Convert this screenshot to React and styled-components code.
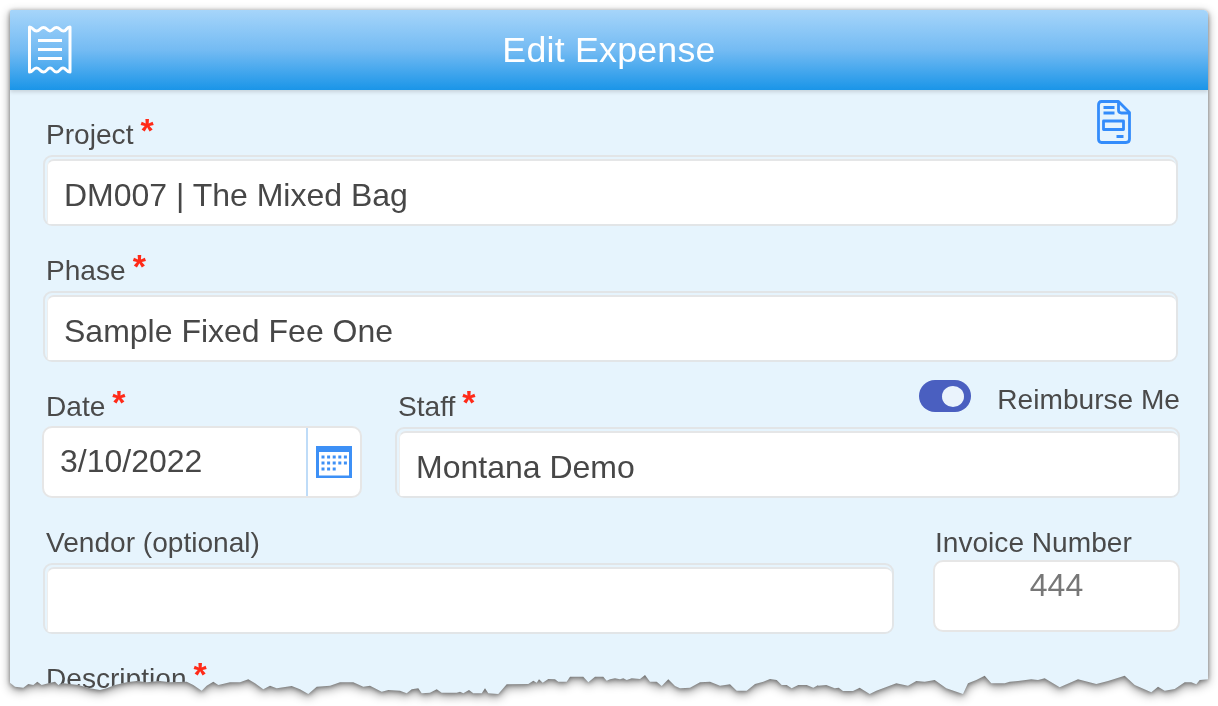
import React from "react";
import styled, { createGlobalStyle } from "styled-components";

const GlobalStyle = createGlobalStyle`
  html, body { margin: 0; padding: 0; background: #fff; overflow: hidden; }
  body { font-family: "Liberation Sans", Arial, sans-serif; }
`;

// torn lower edge, traced from the picture: [originX, originY, points at 3x]
const tearParts = [
  [0, 620, [[30,188],[45,200],[70,203],[85,192],[100,195],[112,185],[125,195],[145,190],[165,185],[175,195],[190,190],[235,195],[270,205],[300,210],[320,205],[345,195],[380,187],[410,183],[440,187],[480,183],[510,187],[560,185],[580,195],[605,212],[620,197],[640,185],[655,195],[690,187],[720,187],[745,178],[765,190],[790,208],[810,197],[830,205],[875,198],[900,208],[925,222],[950,200],[990,197],[1020,187],[1060,187],[1090,200],[1110,197],[1145,215],[1165,210],[1200,212]]],
  [400, 650, [[20,130],[35,118],[55,115],[65,130],[90,128],[110,118],[125,128],[170,128],[180,125],[190,130],[207,120],[220,130],[245,130],[255,115],[265,130],[295,132],[320,103],[385,102],[400,92],[410,98],[417,88],[428,98],[445,87],[465,88],[475,95],[500,95],[510,80],[550,80],[565,97],[585,80],[610,80],[620,92],[630,88]]],
  [610, 650, [[15,85],[30,88],[40,85],[50,90],[65,85],[90,87],[105,75],[120,95],[140,95],[155,108],[175,88],[195,108],[210,115],[240,113],[270,97],[300,95],[330,107],[360,103],[380,122],[410,122],[435,102],[460,95],[480,87],[500,90],[515,105],[530,105],[545,115],[565,105],[590,105],[610,113],[625,105]]],
  [818, 620, [[0,197],[25,195],[50,205],[62,203],[75,213],[105,213],[125,203],[155,222],[175,212],[195,205],[235,190],[270,197],[295,183],[320,185],[350,180],[385,205],[435,222],[450,190],[475,180],[500,167],[520,190],[560,190],[575,185],[600,183],[640,178],[660,180],[680,175],[725,202],[780,178],[835,192],[870,183],[920,167],[950,195],[1000,217],[1020,200],[1040,212],[1070,207],[1100,187],[1120,187],[1135,193],[1145,180],[1170,178]]],
];
const tearPoints = tearParts
  .flatMap(([ox, oy, pts]) => pts.map(([x, y]) => [ox + x / 3 - 10, oy + y / 3 - 10]))
  .reverse()
  .map(([x, y]) => `${x.toFixed(1)}px ${y.toFixed(1)}px`)
  .join(", ");
const cardClip = `polygon(0px 1px, 1px 0px, 1194px 0px, 1196.5px 1px, 1198px 3.5px, ${tearPoints})`;

const Page = styled.div`
  width: 1218px;
  height: 706px;
  padding: 10px 10px 0;
  box-sizing: border-box;
  overflow: hidden;
`;
const ShadowWrap = styled.div`
  filter: drop-shadow(0 1px 2px rgba(0, 0, 0, 0.35)) drop-shadow(0 3px 5px rgba(0, 0, 0, 0.42));
`;
const Card = styled.div`
  width: 1198px;
  height: 690px;
  background: #e6f4fd;
  overflow: hidden;
  clip-path: ${cardClip};
`;
const Header = styled.header`
  height: 80px;
  position: relative;
  display: flex;
  align-items: center;
  justify-content: center;
  background: linear-gradient(to bottom, #a6d5fa 0%, #74bbf3 50%, #1a95e8 100%);
  box-shadow: 0 2px 4px rgba(0, 0, 0, 0.14);
`;
const HeaderIcon = styled.svg`
  position: absolute;
  left: 18px;
  top: 15px;
  width: 44px;
  height: 50px;
`;
const Title = styled.h1`
  margin: 0;
  font-size: 35.7px;
  font-weight: 400;
  letter-spacing: 0.25px;
  color: #fff;
  line-height: 80px;
`;
const Form = styled.main`
  padding: 29px 30px 0 33px;
  display: flex;
  flex-direction: column;
  gap: 29px;
`;
const Block = styled.section`
  display: flex;
  flex-direction: column;
`;
const LabelRow = styled.div`
  height: 36px;
  display: flex;
  justify-content: space-between;
  align-items: flex-start;
`;
const Label = styled.label`
  padding-left: ${(p) => p.$indent ?? 3}px;
  font-size: 28.1px;
  line-height: 32px;
  color: #4a4a4a;
  white-space: nowrap;
`;
const Star = styled.span`
  margin-left: 7px;
  font-size: 34px;
  font-weight: 700;
  line-height: 0;
  color: #ff2a18;
  vertical-align: 2px;
`;
const DocIcon = styled.svg`
  width: 34px;
  height: 44px;
  margin: -19px 47px 0 0;
  flex: none;
`;
const Field = styled.div`
  height: 71px;
  box-sizing: border-box;
  padding: 2px 0 0 2px;
  border: 2px solid #e2e5e7;
  border-radius: 9px;
`;
const FieldInner = styled.div`
  height: 100%;
  box-sizing: border-box;
  padding: 6px 0 0 16px;
  display: flex;
  align-items: center;
  background: #fff;
  border-top: 2px solid #e5e6e7;
  border-left: 1px solid #eeeeee;
  border-radius: 7px 7px 7px 2px;
  font-size: 32px;
  color: #474747;
  white-space: nowrap;
`;
const TripleRow = styled.div`
  display: grid;
  grid-template-columns: 320px 785px;
  column-gap: 33px;
  margin: 0 -2px 0 -1px;
`;
const VendorRow = styled.div`
  display: grid;
  grid-template-columns: 851px 247px;
  column-gap: 39px;
  margin-right: -2px;
`;
const ToggleGroup = styled.div`
  display: flex;
  align-items: center;
  gap: 26px;
  margin-top: -15px;
`;
const Toggle = styled.span`
  width: 52px;
  height: 32px;
  border-radius: 16px;
  background: #4a5fc0;
  display: flex;
  align-items: center;
  justify-content: flex-end;
  padding-right: 7px;
  box-sizing: border-box;
`;
const Knob = styled.span`
  width: 22px;
  height: 21px;
  border-radius: 50%;
  background: #eaf3fc;
`;
const ToggleText = styled.span`
  padding-top: 8px;
  font-size: 28.1px;
  line-height: 32px;
  color: #4a4a4a;
  white-space: nowrap;
`;
const DateBox = styled.div`
  height: 72px;
  margin-top: -1px;
  box-sizing: border-box;
  display: flex;
  background: #fff;
  border: 2px solid #e6e6e6;
  border-radius: 10px;
`;
const DateValue = styled.div`
  flex: 1;
  padding: 0 0 2px 16px;
  display: flex;
  align-items: center;
  font-size: 32px;
  color: #474747;
  border-right: 2px solid #bfdcf8;
`;
const CalendarSlot = styled.div`
  width: 52px;
  display: flex;
  align-items: center;
  justify-content: center;
`;
const InvoiceBox = styled.div`
  height: 72px;
  margin-top: -3px;
  box-sizing: border-box;
  padding-top: 5px;
  background: #fff;
  border: 2px solid #e6e6e6;
  border-radius: 10px;
  text-align: center;
  font-size: 32px;
  line-height: 37px;
  color: #777;
`;

const ReceiptGlyph = () => (
  <HeaderIcon viewBox="0 0 44 50" fill="none" stroke="#fff" strokeWidth="3" strokeLinejoin="round" strokeLinecap="round">
    <path d="M1.5 2 C5 2 5 6 8.5 6 C12 6 12 2.5 15.5 2.5 C19 2.5 19 6 22 6 C25 6 25 2.5 28.5 2.5 C32 2.5 32 6 35.5 6 C39 6 38 2 42 2 V47 C38 47 38 43 35 43 C32 43 32 47 28.5 47 C25 47 25 43 22 43 C19 43 19 47 15.5 47 C12 47 12 43 8.5 43 C5 43 5 47 1.5 47 Z" />
    <path d="M10 15.5 H34 M10 24.5 H34 M10 33.5 H34" strokeLinecap="butt" strokeWidth="3" />
  </HeaderIcon>
);

const DocGlyph = () => (
  <DocIcon viewBox="0 0 34 44" fill="none" stroke="#338cfb" strokeWidth="2.8" strokeLinejoin="round">
    <path d="M4.5 1.5 H21.5 L32.5 12.5 V39 Q32.5 42.5 29 42.5 H4.5 Q1.5 42.5 1.5 39 V5 Q1.5 1.5 4.5 1.5 Z" />
    <path d="M21.5 1.5 V10 Q21.5 13 24.5 13 H32.5" />
    <path d="M6.5 7.5 H17.5 M6.5 13 H17.5 M19.5 36.5 H26.5" strokeWidth="2.8" />
    <rect x="6.5" y="21" width="20" height="8.5" />
  </DocIcon>
);

const calendarDots = [
  [0, 0], [1, 0], [2, 0], [3, 0], [4, 0],
  [0, 1], [1, 1], [2, 1], [3, 1], [4, 1],
  [0, 2], [1, 2], [2, 2],
];
const CalendarGlyph = () => (
  <svg width="36" height="32" viewBox="0 0 36 32">
    <rect width="36" height="32" fill="#3d90f6" />
    <rect x="3" y="6" width="30" height="23.5" fill="#fff" />
    {calendarDots.map(([c, r]) => (
      <rect key={`${c}-${r}`} x={5.5 + c * 5.6} y={9.5 + r * 6} width="3" height="3" fill="#3d90f6" />
    ))}
  </svg>
);

const Required = () => <Star>*</Star>;

export default function App() {
  return (
    <>
      <GlobalStyle />
      <Page>
        <ShadowWrap>
          <Card>
            <Header>
              <ReceiptGlyph />
              <Title>Edit Expense</Title>
            </Header>
            <Form>
              <Block>
                <LabelRow>
                  <Label>Project<Required /></Label>
                  <DocGlyph />
                </LabelRow>
                <Field><FieldInner>DM007 | The Mixed Bag</FieldInner></Field>
              </Block>
              <Block>
                <LabelRow><Label>Phase<Required /></Label></LabelRow>
                <Field><FieldInner>Sample Fixed Fee One</FieldInner></Field>
              </Block>
              <TripleRow>
                <Block>
                  <LabelRow><Label $indent={4}>Date<Required /></Label></LabelRow>
                  <DateBox>
                    <DateValue>3/10/2022</DateValue>
                    <CalendarSlot><CalendarGlyph /></CalendarSlot>
                  </DateBox>
                </Block>
                <Block>
                  <LabelRow>
                    <Label>Staff<Required /></Label>
                    <ToggleGroup>
                      <Toggle><Knob /></Toggle>
                      <ToggleText>Reimburse Me</ToggleText>
                    </ToggleGroup>
                  </LabelRow>
                  <Field><FieldInner>Montana Demo</FieldInner></Field>
                </Block>
              </TripleRow>
              <VendorRow>
                <Block>
                  <LabelRow><Label>Vendor (optional)</Label></LabelRow>
                  <Field><FieldInner /></Field>
                </Block>
                <Block>
                  <LabelRow><Label $indent={2}>Invoice Number</Label></LabelRow>
                  <InvoiceBox>444</InvoiceBox>
                </Block>
              </VendorRow>
              <Block>
                <LabelRow><Label>Description<Required /></Label></LabelRow>
              </Block>
            </Form>
          </Card>
        </ShadowWrap>
      </Page>
    </>
  );
}
